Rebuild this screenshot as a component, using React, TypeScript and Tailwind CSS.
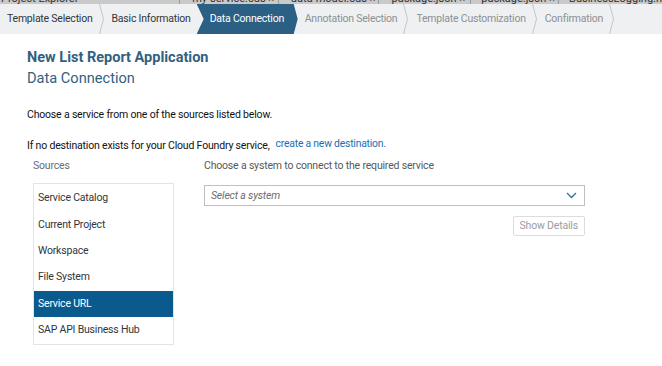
import React from 'react';

const FONT = "font-['Roboto','Liberation_Sans',Arial,sans-serif]";

const steps = [
  { label: 'Template Selection', state: 'done' },
  { label: 'Basic Information', state: 'done' },
  { label: 'Data Connection', state: 'active' },
  { label: 'Annotation Selection', state: 'todo' },
  { label: 'Template Customization', state: 'todo' },
  { label: 'Confirmation', state: 'todo' },
];

const sources = ['Service Catalog', 'Current Project', 'Workspace', 'File System', 'Service URL', 'SAP API Business Hub'];

const Chevron: React.FC = () => (
  <svg width="5" height="30" viewBox="0 0 5 30" className="shrink-0">
    <polyline points="0.5,0 4.5,15 0.5,30" fill="none" stroke="#c4c7ca" strokeWidth="1" />
  </svg>
);

export default function App() {
  return (
    <div className={`w-[662px] h-[366px] bg-white overflow-hidden ${FONT}`}>
      {/* editor tabs peeking out above the wizard */}
      <div className="h-[4px] bg-[#c9c9c9] overflow-hidden flex text-[11px] leading-[11px] text-[#333] whitespace-nowrap">
        <span className="-mt-[7px] w-[183px] pl-[1px] border-r border-[#9a9a9a]">Project Explorer</span>
        <span className="-mt-[7px] w-[100px] pl-[12px] border-r border-[#9a9a9a]">my-service.cds ×</span>
        <span className="-mt-[7px] w-[102px] pl-[12px] border-r border-[#9a9a9a]">data-model.cds ×</span>
        <span className="-mt-[7px] w-[93px] pl-[12px] border-r border-[#9a9a9a]">package.json ×</span>
        <span className="-mt-[7px] w-[89px] pl-[10px] border-r border-[#9a9a9a]">package.json ×</span>
        <span className="-mt-[7px] pl-[10px]">BusinessLogging.h</span>
      </div>

      {/* wizard steps */}
      <div className="h-[30px] bg-[#eef0f2] flex items-center text-[10.5px] tracking-[-0.22px] pl-[7px] whitespace-nowrap">
        {steps.map((s, i) =>
          s.state === 'active' ? (
            <div
              key={s.label}
              className="h-full w-[101px] shrink-0 bg-[#2c5f84] text-white flex items-center pl-[13px] mr-[7px] [clip-path:polygon(0_0,97px_0,101px_50%,97px_100%,0_100%,7px_50%)]"
            >
              {s.label}
            </div>
          ) : (
            <div key={s.label} className="flex items-center h-full shrink-0">
              <span className={s.state === 'done' ? 'text-[#32363a]' : 'text-[#8c9094]'}>{s.label}</span>
              {steps[i + 1]?.state === 'active' ? (
                <span className="w-[6px]" />
              ) : (
                <span className="ml-[6px] mr-[8px] flex">
                  <Chevron />
                </span>
              )}
            </div>
          )
        )}
      </div>

      <div className="pl-[27px] pr-[77px] text-[10.5px] tracking-[-0.18px]">
        <h1 className="mt-[14px] text-[14.5px] leading-[20px] font-bold tracking-normal text-[#32617f]">New List Report Application</h1>
        <h2 className="mt-[0px] text-[14.6px] leading-[20px] tracking-normal text-[#32617f]">Data Connection</h2>

        <p className="mt-[19px] leading-[16px] text-[#111]">Choose a service from one of the sources listed below.</p>
        <p className="mt-[15px] leading-[16px] text-[#111]">
          If no destination exists for your Cloud Foundry service,
          <span className="ml-[6px] text-[10.4px] tracking-[-0.22px] text-[#1a6fb4] relative -top-[2px]">create a new destination.</span>
        </p>

        <div className="mt-[4px] flex gap-[30px]">
          <div className="w-[141px] ml-[6px] shrink-0">
            <div className="leading-[16px] text-[#6a6d70]">Sources</div>
            <div className="mt-[9px] border border-[#e4e4e4] py-[1px]">
              {sources.map((src) => (
                <div
                  key={src}
                  className={`h-[26.4px] flex items-center pl-[4px] tracking-[-0.2px] ${
                    src === 'Service URL' ? 'bg-[#0b5a8d] text-white' : 'text-[#32363a]'
                  }`}
                >
                  {src}
                </div>
              ))}
            </div>
          </div>

          <div className="flex-1">
            <div className="leading-[16px] text-[#55585b]">Choose a system to connect to the required service</div>
            <div className="mt-[11px] h-[21px] border border-[#bfbfbf] flex items-center justify-between pl-[6px] pr-[7px]">
              <span className="italic text-[#6a6d70]">Select a system</span>
              <svg width="11" height="7" viewBox="0 0 11 7">
                <polyline points="1,1 5.5,5.5 10,1" fill="none" stroke="#3a6f96" strokeWidth="1.3" />
              </svg>
            </div>
            <div className="mt-[10px] flex justify-end">
              <div className="h-[20px] px-[6px] border border-[#dcdcdc] rounded-[2px] flex items-center text-[#9a9da0]">
                Show Details
              </div>
            </div>
          </div>
        </div>
      </div>
    </div>
  );
}
